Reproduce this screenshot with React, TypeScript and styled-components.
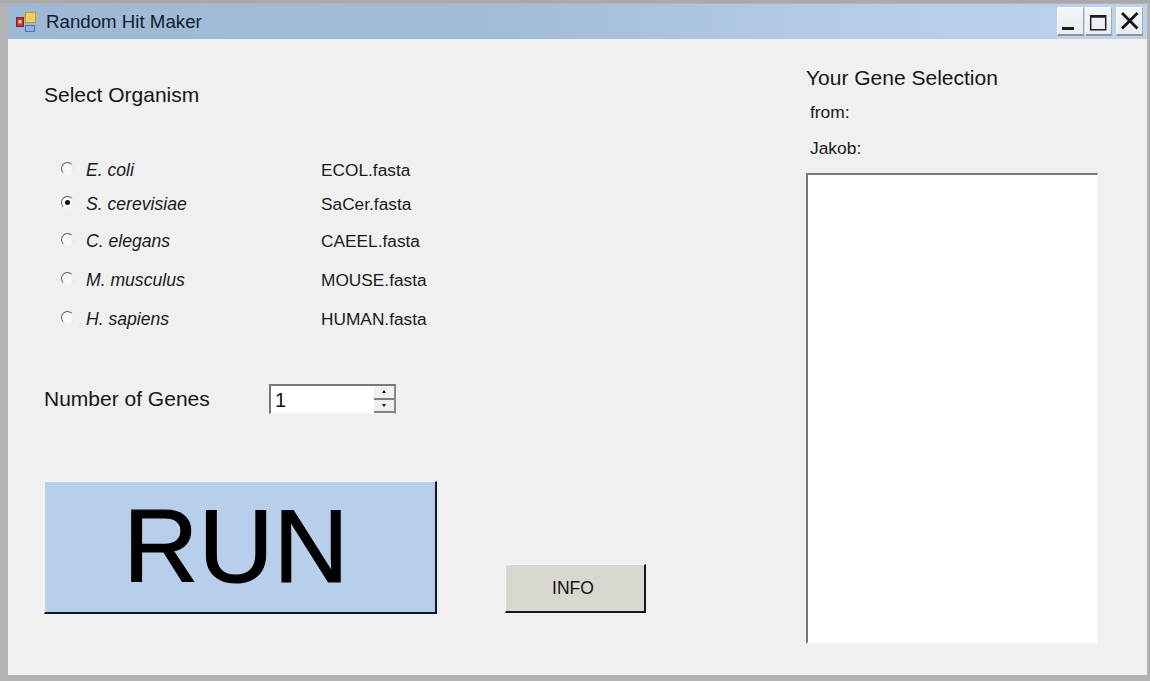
import React from "react";
import styled, { createGlobalStyle } from "styled-components";

const Global = createGlobalStyle`
  html, body { margin: 0; padding: 0; width: 1150px; height: 681px; overflow: hidden; background: #b3b3b3; }
  * { box-sizing: border-box; }
  body { font-family: "Liberation Sans", Arial, sans-serif; color: #161616; }
`;

const Frame = styled.div`
  width: 1150px;
  height: 681px;
  padding: 4px 3px 6px 8px;
  background: linear-gradient(#a9a9a9 0 3px, #b3b3b3 3px);
  display: flex;
  flex-direction: column;
`;

const TitleBar = styled.header`
  height: 35px;
  flex: none;
  display: flex;
  align-items: center;
  padding-left: 7px;
  background: linear-gradient(90deg, #9db8d6 0%, #a3bcd8 45%, #b5cde8 75%, #bcd3ee 100%);
`;

const AppIcon = styled.svg`
  width: 23px;
  height: 23px;
  flex: none;
`;

const Title = styled.span`
  margin-left: 8px;
  font-size: 18.7px;
  color: #14202c;
  font-family: "Liberation Sans", Arial, sans-serif;
`;

const WindowControls = styled.div`
  margin-left: auto;
  margin-right: 4px;
  margin-top: -1px;
  display: flex;
  gap: 1px;
`;

const ControlButton = styled.button<{ $apart?: boolean }>`
  width: 27px;
  height: 29px;
  padding: 0;
  margin-left: ${(p) => (p.$apart ? 3 : 0)}px;
  border: 0;
  background: linear-gradient(#f4f5f7, #e9ebee);
  border-bottom: 2px solid #8f9399;
  border-right: 1px solid #a5a8ad;
  border-top: 1px solid #fafafa;
  border-left: 1px solid #fafafa;
  display: flex;
  align-items: center;
  justify-content: center;
`;

const ControlGlyph = styled.svg`
  width: 21px;
  height: 21px;
`;

const Body = styled.main`
  flex: 1;
  background: #f0f0f0;
  display: flex;
  padding-left: 36px;
  min-height: 0;
`;

const LeftColumn = styled.section`
  width: 762px;
  flex: none;
  display: flex;
  flex-direction: column;
`;

const Heading = styled.h2`
  margin: 0;
  font-size: 21px;
  line-height: 24px;
  font-weight: 400;
  color: #161616;
`;

const OrganismHeading = styled(Heading)`
  margin-top: 44px;
`;

const OrganismList = styled.ul`
  list-style: none;
  margin: 0;
  padding: 0 0 0 17px;
  margin-top: 51px;
  display: flex;
  flex-direction: column;
`;

const OrganismRow = styled.li<{ $gap: number }>`
  display: grid;
  grid-template-columns: 13px 223px 1fr;
  column-gap: 12px;
  align-items: center;
  height: 24px;
  margin-top: ${(p) => p.$gap}px;
`;

const Radio = styled.span<{ $checked?: boolean }>`
  width: 13px;
  height: 13px;
  margin-top: -4px;
  border-radius: 50%;
  background: #f7f7f7;
  border: 1.5px solid;
  border-color: #5e5e5e #e2e2e2 #f6f6f6 #5e5e5e;
  display: flex;
  align-items: center;
  justify-content: center;
  &::after {
    content: "";
    width: 5px;
    height: 5px;
    border-radius: 50%;
    background: ${(p) => (p.$checked ? "#111" : "transparent")};
  }
`;

const Species = styled.span`
  font-size: 17.6px;
  font-style: italic;
  color: #1a1a1a;
`;

const FileName = styled.span`
  font-size: 17.3px;
  color: #1a1a1a;
`;

const GenesRow = styled.div`
  margin-top: 53px;
  display: flex;
  align-items: center;
`;

const GenesLabel = styled(Heading)`
  width: 225px;
`;

const Spinner = styled.div`
  width: 127px;
  height: 30px;
  display: flex;
  background: #fff;
  border-top: 2px solid #777;
  border-left: 2px solid #777;
  border-right: 2px solid #8a8a8a;
  border-bottom: 1px solid #f8f8f8;
`;

const SpinnerValue = styled.span`
  flex: 1;
  font-size: 20px;
  line-height: 28px;
  padding-left: 4px;
  color: #111;
`;

const SpinnerButtons = styled.div`
  width: 20px;
  display: flex;
  flex-direction: column;
`;

const SpinnerButton = styled.span<{ $down?: boolean }>`
  flex: 1;
  background: #f0f0f0;
  border-bottom: 2px solid #808080;
  display: flex;
  align-items: center;
  justify-content: center;
  &::after {
    content: "";
    border-left: 2.5px solid transparent;
    border-right: 2.5px solid transparent;
    ${(p) => (p.$down ? "border-top: 3px solid #111;" : "border-bottom: 3px solid #111;")}
  }
`;

const Actions = styled.div`
  margin-top: 67px;
  display: flex;
  align-items: flex-end;
  gap: 68px;
`;

const RaisedButton = styled.button`
  padding: 0;
  font-family: "Liberation Sans", Arial, sans-serif;
  border-style: solid;
  border-width: 1px 2px 2px 1px;
  border-color: #f8f8f8 #101828 #101828 #f8f8f8;
`;

const RunButton = styled(RaisedButton)`
  width: 393px;
  height: 133px;
  padding-bottom: 3px;
  padding-right: 8px;
  background: #b8cfeb;
  color: #000;
  font-size: 104px;
  line-height: 1;
  -webkit-text-stroke: 1.2px #000;
`;

const InfoButton = styled(RaisedButton)`
  width: 141px;
  height: 49px;
  margin-bottom: 1px;
  padding-right: 4px;
  background: #d9d8d0;
  color: #111;
  font-size: 17.5px;
`;

const RightColumn = styled.aside`
  width: 292px;
  flex: none;
  display: flex;
  flex-direction: column;
  padding-top: 27px;
`;

const Note = styled.p`
  margin: 0 0 0 4px;
  font-size: 17.4px;
  line-height: 20px;
  color: #1a1a1a;
`;

const FromNote = styled(Note)`
  margin-top: 12px;
`;

const AuthorNote = styled(Note)`
  margin-top: 16px;
`;

const GeneOutput = styled.div`
  margin-top: 15px;
  width: 292px;
  height: 471px;
  background: #fff;
  border-top: 2px solid #777;
  border-left: 2px solid #777;
  border-right: 1px solid #f7f7f7;
  border-bottom: 2px solid #f7f7f7;
`;

const organisms = [
  { species: "E. coli", file: "ECOL.fasta", gap: 0 },
  { species: "S. cerevisiae", file: "SaCer.fasta", gap: 10, checked: true },
  { species: "C. elegans", file: "CAEEL.fasta", gap: 13 },
  { species: "M. musculus", file: "MOUSE.fasta", gap: 15 },
  { species: "H. sapiens", file: "HUMAN.fasta", gap: 15 },
];

export default function App() {
  return (
    <>
      <Global />
      <Frame>
        <TitleBar>
          <AppIcon viewBox="0 0 23 23">
            <rect x="1.5" y="7.5" width="7" height="9" fill="#c9302c" stroke="#8a1f1c" />
            <rect x="3.5" y="10" width="3" height="3.5" fill="#f3c6c0" />
            <rect x="10.5" y="2.5" width="10" height="10" fill="#f2cf5c" stroke="#c49a22" />
            <rect x="10.5" y="15.5" width="9" height="6" fill="#8fb0e6" stroke="#4a74bc" />
          </AppIcon>
          <Title>Random Hit Maker</Title>
          <WindowControls>
            <ControlButton aria-label="Minimize">
              <ControlGlyph viewBox="0 0 21 21">
                <rect x="2" y="17" width="12" height="3" fill="#1a1f26" />
              </ControlGlyph>
            </ControlButton>
            <ControlButton aria-label="Maximize">
              <ControlGlyph viewBox="0 0 21 21">
                <path d="M2.7 5.7h15v14h-15z M2.7 7h15" fill="none" stroke="#1a1f26" strokeWidth="1.5" />
              </ControlGlyph>
            </ControlButton>
            <ControlButton $apart aria-label="Close">
              <ControlGlyph viewBox="0 0 21 21">
                <path d="M3 3l15.5 15.5M18.5 3L3 18.5" fill="none" stroke="#12161c" strokeWidth="2.8" />
              </ControlGlyph>
            </ControlButton>
          </WindowControls>
        </TitleBar>
        <Body>
          <LeftColumn>
            <OrganismHeading>Select Organism</OrganismHeading>
            <OrganismList>
              {organisms.map((o) => (
                <OrganismRow key={o.file} $gap={o.gap}>
                  <Radio $checked={o.checked} />
                  <Species>{o.species}</Species>
                  <FileName>{o.file}</FileName>
                </OrganismRow>
              ))}
            </OrganismList>
            <GenesRow>
              <GenesLabel>Number of Genes</GenesLabel>
              <Spinner>
                <SpinnerValue>1</SpinnerValue>
                <SpinnerButtons>
                  <SpinnerButton />
                  <SpinnerButton $down />
                </SpinnerButtons>
              </Spinner>
            </GenesRow>
            <Actions>
              <RunButton>RUN</RunButton>
              <InfoButton>INFO</InfoButton>
            </Actions>
          </LeftColumn>
          <RightColumn>
            <Heading>Your Gene Selection</Heading>
            <FromNote>from:</FromNote>
            <AuthorNote>Jakob:</AuthorNote>
            <GeneOutput />
          </RightColumn>
        </Body>
      </Frame>
    </>
  );
}
